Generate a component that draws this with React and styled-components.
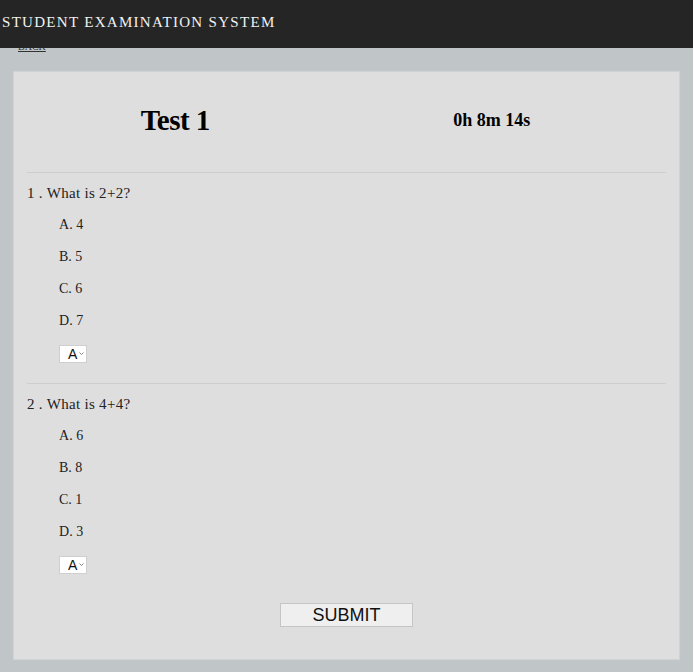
import React from "react";
import styled, { createGlobalStyle } from "styled-components";

const GlobalStyle = createGlobalStyle`
  body {
    margin: 0;
    background-color: #c0c5c8;
    font-family: "Liberation Serif", "Times New Roman", serif;
  }
`;

const Navbar = styled.header`
  position: fixed;
  top: 0;
  left: 0;
  right: 0;
  height: 48px;
  background-color: #252525;
  z-index: 10;
`;

const Brand = styled.h2`
  margin: 0;
  padding: 14px 0 0 2px;
  font-size: 15px;
  font-weight: normal;
  letter-spacing: 1.3px;
  color: #f2f2f2;
  line-height: 17px;
`;

const Page = styled.main`
  padding-top: 41px;
`;

const BackLink = styled.a`
  display: block;
  margin-left: 18px;
  width: max-content;
  font-size: 10px;
  line-height: 11px;
  color: #333;
  text-decoration: underline;
`;

const Card = styled.section`
  margin: 20px 14px 12px;
  padding: 0 13px 32px;
  background-color: #dedede;
  box-shadow: 0 0 1px 1px rgba(255, 255, 255, 0.25);
`;

const TopRow = styled.div`
  box-sizing: border-box;
  display: grid;
  grid-template-columns: 1fr 1fr;
  align-items: center;
  height: 100px;
  padding-bottom: 4px;
  margin: 0 16px 0 -10px;
`;

const Title = styled.h1`
  margin: 0;
  justify-self: center;
  font-size: 29px;
  letter-spacing: -0.5px;
  color: #000;
`;

const Timer = styled.h3`
  margin: 0;
  justify-self: center;
  font-size: 18px;
  color: #000;
`;

const Divider = styled.hr`
  margin: 0;
  border: none;
  border-top: 1px solid #cdcdcd;
`;

const Question = styled.div`
  padding: 10px 0 20px;
`;

const QuestionText = styled.p`
  margin: 0 0 12px;
  font-size: 15px;
  line-height: 20px;
  letter-spacing: 0.3px;
  color: #222;
`;

const Option = styled.p`
  margin: 0 0 12px 32px;
  font-size: 14px;
  line-height: 20px;
  color: #222;
`;

const SelectWrap = styled.div`
  position: relative;
  width: 28px;
  height: 18px;
  margin: 14px 0 0 32px;
`;

const Select = styled.select`
  appearance: none;
  width: 28px;
  height: 18px;
  margin: 0;
  padding: 0 0 0 8px;
  border: 1px solid #cfcfcf;
  border-radius: 0;
  background: #fff;
  font-family: "Liberation Sans", Arial, sans-serif;
  font-size: 14px;
  line-height: 16px;
  color: #111;
`;

const Chevron = styled.svg`
  position: absolute;
  right: 3px;
  top: 7px;
  pointer-events: none;
`;

const SubmitRow = styled.div`
  display: flex;
  justify-content: center;
  padding-top: 9px;
`;

const SubmitButton = styled.button`
  width: 133px;
  height: 24px;
  padding: 0;
  background-color: #efefef;
  border: 1px solid #c5c5c5;
  font-family: "Liberation Sans", Arial, sans-serif;
  font-size: 18px;
  color: #111;
`;

const questions = [
  { text: "What is 2+2?", options: ["4", "5", "6", "7"] },
  { text: "What is 4+4?", options: ["6", "8", "1", "3"] },
];

const letters = ["A", "B", "C", "D"];

function AnswerSelect() {
  return (
    <SelectWrap>
      <Select defaultValue="A">
        {letters.map((l) => (
          <option key={l} value={l}>{l}</option>
        ))}
      </Select>
      <Chevron width="5" height="3" viewBox="0 0 5 3">
        <path d="M0.5 0.5 L2.5 2.5 L4.5 0.5" fill="none" stroke="#777" strokeWidth="0.9" />
      </Chevron>
    </SelectWrap>
  );
}

export default function App() {
  return (
    <>
      <GlobalStyle />
      <Navbar>
        <Brand>STUDENT EXAMINATION SYSTEM</Brand>
      </Navbar>
      <Page>
        <BackLink href="#">BACK</BackLink>
        <Card>
          <TopRow>
            <Title>Test 1</Title>
            <Timer>0h 8m 14s</Timer>
          </TopRow>
          {questions.map((q, i) => (
            <React.Fragment key={i}>
              <Divider />
              <Question>
                <QuestionText>{i + 1} . {q.text}</QuestionText>
                {q.options.map((o, j) => (
                  <Option key={j}>{letters[j]}. {o}</Option>
                ))}
                <AnswerSelect />
              </Question>
            </React.Fragment>
          ))}
          <SubmitRow>
            <SubmitButton>SUBMIT</SubmitButton>
          </SubmitRow>
        </Card>
      </Page>
    </>
  );
}
